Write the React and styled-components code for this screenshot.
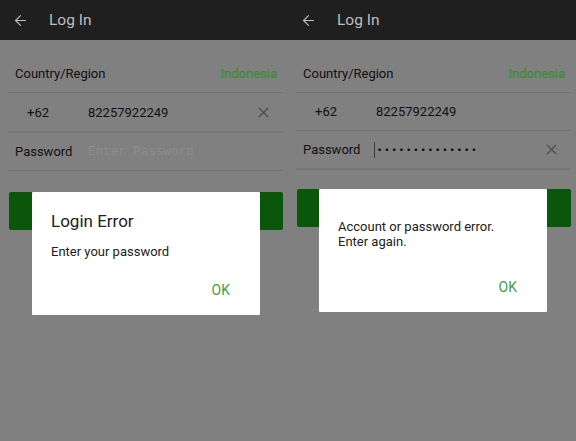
import React from "react";
import styled, { createGlobalStyle } from "styled-components";
import { ArrowLeft, X } from "lucide-react";

const GlobalStyle = createGlobalStyle`
  html, body {
    margin: 0;
    padding: 0;
    background: #808080;
    font-family: Roboto, "Noto Sans", sans-serif;
  }
`;

const Screens = styled.div`
  display: flex;
  width: 576px;
  height: 441px;
  overflow: hidden;
`;

const Phone = styled.div`
  position: relative;
  width: 288px;
  height: 441px;
  flex-shrink: 0;
  background: #808080;
`;

const Header = styled.div`
  display: flex;
  align-items: center;
  height: 40px;
  padding-left: 12px;
  background: #1f1f20;
  color: #bdbdbd;
`;

const HeaderTitle = styled.span`
  margin-left: 20px;
  font-size: 15.5px;
  font-weight: 400;
`;

const Form = styled.div`
  margin: 14px 5px 0 8px;
`;

const Row = styled.div`
  display: flex;
  align-items: center;
  height: ${(p) => p.$h}px;
  padding: 0 6px 0 7px;
  border-bottom: ${(p) => (p.$active ? "2px solid #6b7f69" : "1px solid #747474")};
  font-size: 13px;
  color: #111;
`;

const Label = styled.span`
  width: 73px;
  flex-shrink: 0;
`;

const Prefix = styled.span`
  width: 61px;
  padding-left: 12px;
  flex-shrink: 0;
`;

const Region = styled.span`
  margin-left: auto;
  color: #2f9128;
`;

const Value = styled.span`
  flex: 1;
`;

const Placeholder = styled.span`
  flex: 1;
  font-family: "Liberation Mono", "DejaVu Sans Mono", monospace;
  font-size: 12.6px;
  color: #8d8d8d;
`;

const Cursor = styled.span`
  width: 1px;
  height: 16px;
  background: #3c3c3c;
  margin-left: -2px;
  margin-right: 2px;
`;

const Dots = styled.span`
  flex: 1;
  font-family: "DejaVu Sans", sans-serif;
  font-size: 9px;
  letter-spacing: 1.95px;
  color: #0a0a0a;
`;

const Clear = styled(X)`
  color: #4a4a4a;
  margin-right: 5px;
`;

const Button = styled.div`
  height: 38px;
  margin: ${(p) => p.$top}px 5px 0 9px;
  background: #0a560a;
  border-radius: 2px;
`;

const Dialog = styled.div`
  position: absolute;
  left: ${(p) => p.$x}px;
  top: ${(p) => p.$y}px;
  width: 228px;
  height: 123px;
  box-sizing: border-box;
  display: flex;
  flex-direction: column;
  padding: ${(p) => p.$pt}px 30px 0 19px;
  background: #fff;
  border-radius: 1px;
  color: #212121;
`;

const DialogTitle = styled.div`
  font-size: 17px;
  line-height: 20px;
`;

const DialogText = styled.div`
  font-size: 13px;
  line-height: 15px;
  margin-top: ${(p) => p.$mt}px;
`;

const OkButton = styled.div`
  margin-top: auto;
  margin-bottom: 17px;
  align-self: flex-end;
  font-size: 14px;
  color: #3fa046;
`;

const LoginHeader = () => (
  <Header>
    <ArrowLeft size={17} strokeWidth={1.6} />
    <HeaderTitle>Log In</HeaderTitle>
  </Header>
);

export default function App() {
  return (
    <>
      <GlobalStyle />
      <Screens>
        <Phone>
          <LoginHeader />
          <Form>
            <Row $h={38}>
              <span>Country/Region</span>
              <Region>Indonesia</Region>
            </Row>
            <Row $h={38} $active>
              <Prefix>+62</Prefix>
              <Value>82257922249</Value>
              <Clear size={17} strokeWidth={1.5} />
            </Row>
            <Row $h={37}>
              <Label>Password</Label>
              <Placeholder>Enter Password</Placeholder>
            </Row>
          </Form>
          <Button $top={21} />
          <Dialog $x={32} $y={192} $pt={19}>
            <DialogTitle>Login Error</DialogTitle>
            <DialogText $mt={13}>Enter your password</DialogText>
            <OkButton>OK</OkButton>
          </Dialog>
        </Phone>
        <Phone>
          <LoginHeader />
          <Form>
            <Row $h={38}>
              <span>Country/Region</span>
              <Region>Indonesia</Region>
            </Row>
            <Row $h={37}>
              <Prefix>+62</Prefix>
              <Value>82257922249</Value>
            </Row>
            <Row $h={37} $active>
              <Label>Password</Label>
              <Cursor />
              <Dots>{"\u2022".repeat(14)}</Dots>
              <Clear size={17} strokeWidth={1.5} />
            </Row>
          </Form>
          <Button $top={19} />
          <Dialog $x={31} $y={189} $pt={30}>
            <DialogText $mt={0}>
              Account or password error.
              <br />
              Enter again.
            </DialogText>
            <OkButton>OK</OkButton>
          </Dialog>
        </Phone>
      </Screens>
    </>
  );
}
